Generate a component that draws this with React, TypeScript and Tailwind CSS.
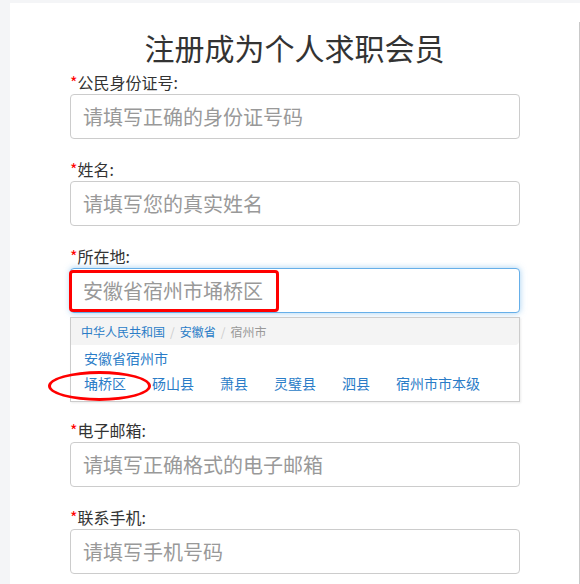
const cjk = "font-['Microsoft_YaHei','Noto_Sans_CJK_SC',sans-serif]";

interface FieldProps {
  label: string;
  placeholder: string;
  className?: string;
}

function Label({ text }: { text: string }) {
  return (
    <div className="h-[24px] text-[16px] leading-[24px] text-[#333]">
      <span className="text-[#f00]">*</span>
      {text}:
    </div>
  );
}

function Field({ label, placeholder, className }: FieldProps) {
  return (
    <div className={className}>
      <Label text={label} />
      <div className="flex h-[45px] items-center rounded-[4px] border border-[#ccc] bg-white pl-[12px] text-[20px] text-[#999]">
        {placeholder}
      </div>
    </div>
  );
}

const counties = ["埇桥区", "砀山县", "萧县", "灵璧县", "泗县", "宿州市市本级"];

export default function App() {
  return (
    <div className={`flex min-h-[584px] bg-[#f4f5f7] pl-[10px] pt-[3px] ${cjk}`}>
      <div className="flex flex-1 bg-white">
        <main className="flex-1 pt-[26px]">
          <h1 className="text-center text-[30px] leading-[36px] text-[#333]">注册成为个人求职会员</h1>

          <div className="ml-[60px] mt-[5px] w-[450px]">
            <Field label="公民身份证号" placeholder="请填写正确的身份证号码" />
            <Field className="mt-[18px]" label="姓名" placeholder="请填写您的真实姓名" />

            <div className="relative mt-[18px]">
              <Label text="所在地" />
              <div className="flex h-[45px] items-center rounded-[4px] border border-[#66afe9] bg-white pl-[12px] text-[20px] text-[#999] shadow-[0_0_6px_rgba(102,175,233,0.6)]">
                安徽省宿州市埇桥区
              </div>
              <div className="absolute left-[-1px] top-[26px] h-[42px] w-[210px] rounded-[4px] border-[3px] border-[#f00]" />

              <div className="mt-[4px] border border-[#ccc] bg-white pb-[5px] shadow-[1px_1px_2px_rgba(0,0,0,0.08)]">
                <div className="flex h-[27px] items-center rounded-br-[4px] bg-[#f4f4f4] pl-[10px] text-[12px]">
                  <span className="text-[#2a7cc7]">中华人民共和国</span>
                  <span className="mx-[5px] text-[#ccc]">/</span>
                  <span className="text-[#2a7cc7]">安徽省</span>
                  <span className="mx-[5px] text-[#ccc]">/</span>
                  <span className="text-[#999]">宿州市</span>
                </div>
                <div className="pl-[13px] pt-[1px] text-[14px] leading-[24px] text-[#2a7cc7]">安徽省宿州市</div>
                <div className="relative flex gap-x-[26px] pl-[13px] text-[14px] leading-[26px] text-[#2a7cc7]">
                  {counties.map((c) => (
                    <span key={c}>{c}</span>
                  ))}
                  <div className="absolute left-[-23px] top-[1px] h-[30px] w-[103px] rounded-[50%] border-[3px] border-[#f00]" />
                </div>
              </div>
            </div>

            <Field className="mt-[16px]" label="电子邮箱" placeholder="请填写正确格式的电子邮箱" />
            <Field className="mt-[18px]" label="联系手机" placeholder="请填写手机号码" />
          </div>
        </main>
        <div className="mt-[19px] w-[1px] bg-[#c9c9c9]" />
      </div>
    </div>
  );
}
